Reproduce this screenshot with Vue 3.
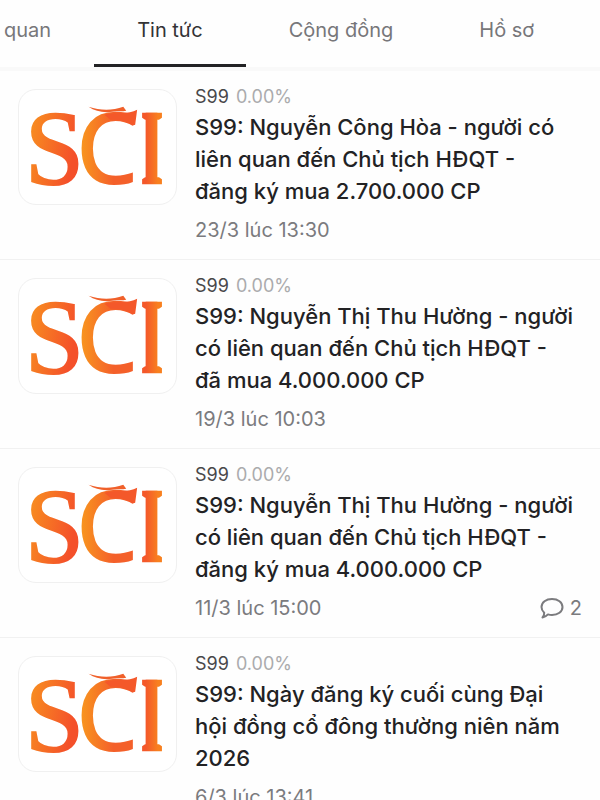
<template>
  <div class="page">
    <nav class="tabs" aria-label="S99">
      <button
        v-for="tab in tabs"
        :key="tab"
        type="button"
        class="tab"
        :class="{ active: tab === activeTab }"
        @click="activeTab = tab"
      >
        {{ tab }}
      </button>
    </nav>

    <main class="news-list">
      <article v-for="item in news" :key="item.time" class="news-item">
        <div class="thumb">
          <svg class="logo" viewBox="0 0 158 115" aria-hidden="true">
            <defs>
              <linearGradient id="warm" x1="0" y1="0" x2="1" y2="0.4">
                <stop offset="0.1" stop-color="#f8941f" />
                <stop offset="0.9" stop-color="#f4502a" />
              </linearGradient>
              <linearGradient id="curve" x1="0" y1="0" x2="1" y2="0">
                <stop offset="0.1" stop-color="#f8941f" />
                <stop offset="0.6" stop-color="#f4602a" />
              </linearGradient>
              <linearGradient id="stem" x1="124" y1="0" x2="144" y2="0" gradientUnits="userSpaceOnUse">
                <stop offset="0.2" stop-color="#f4582a" />
                <stop offset="0.8" stop-color="#f8801f" />
              </linearGradient>
            </defs>
            <text class="letter" x="6" y="95" fill="url(#warm)" stroke="url(#warm)">S</text>
            <text class="letter round" x="57" y="95" fill="url(#curve)">C</text>
            <text class="letter narrow" x="118" y="95" fill="url(#stem)">I</text>
            <path d="M124 23 H144 V28 L141 30 H127 L124 28 Z M124 95 H144 V90 L141 88 H127 L124 90 Z" fill="url(#stem)" />
            <path d="M86 25 C98 22 110 25 119 20 L117 35 L114 36 C109 31 101 30 92 30 Z" fill="#f4582a" />
            <path d="M70 17 C82 21 94 21 105 17 L108 21 C104 22 100 21 94 22 C85 23 77 22 70 17 Z" fill="#f0602a" />
          </svg>
        </div>
        <div class="content">
          <p class="ticker">S99 <span class="change">0.00%</span></p>
          <h2 class="title">{{ item.title }}</h2>
          <div class="meta">
            <time>{{ item.time }}</time>
            <span v-if="item.comments" class="comments">
              <svg class="bubble" viewBox="0 0 24 22" aria-hidden="true">
                <path d="M12 2 C18 2 22.5 5.300 22.500 10 C22.500 14.600 18 18 12 18 C10.500 18 9.200 17.800 8 17.400 C6.500 19 4.800 20 2.500 20.500 C3.800 19 4.300 17.500 4.200 15.700 C2.500 14.200 1.500 12.300 1.500 10 C1.500 5.300 6 2 12 2 Z" />
              </svg>
              {{ item.comments }}
            </span>
          </div>
        </div>
      </article>
    </main>
  </div>
</template>

<script setup>
import { ref } from 'vue';

const tabs = ['quan', 'Tin tức', 'Cộng đồng', 'Hồ sơ'];
const activeTab = ref('Tin tức');

// Line breaks in the titles are kept when rendered
const news = [
  {
    title: 'S99: Nguyễn Công Hòa - người có\nliên quan đến Chủ tịch HĐQT -\nđăng ký mua 2.700.000 CP',
    time: '23/3 lúc 13:30'
  },
  {
    title: 'S99: Nguyễn Thị Thu Hường - người\ncó liên quan đến Chủ tịch HĐQT -\nđã mua 4.000.000 CP',
    time: '19/3 lúc 10:03'
  },
  {
    title: 'S99: Nguyễn Thị Thu Hường - người\ncó liên quan đến Chủ tịch HĐQT -\nđăng ký mua 4.000.000 CP',
    time: '11/3 lúc 15:00',
    comments: 2
  },
  {
    title: 'S99: Ngày đăng ký cuối cùng Đại\nhội đồng cổ đông thường niên năm\n2026',
    time: '6/3 lúc 13:41'
  }
];
</script>

<style scoped>
.page {
  height: 100vh;
  overflow: hidden;
  background: #fefefe;
  color: #222224;
  font-family: Inter, Roboto, sans-serif;
}

.tabs {
  display: flex;
  height: 67px;
  overflow: hidden;
  border-bottom: 4px solid #f9f9f9;
}

.tab {
  flex: none;
  padding: 0 43px 5px;
  border: 0;
  border-bottom: 3px solid transparent;
  background: none;
  color: #77777a;
  font: inherit;
  font-size: 20px;
  cursor: pointer;
}

.tab:first-child {
  padding-left: 4px;
}

.tab.active {
  border-bottom-color: #222224;
  color: #333335;
}

.news-item {
  display: flex;
  align-items: flex-start;
  gap: 18px;
  padding: 14px 18px 17px;
  border-bottom: 1px solid #f1f1f1;
}

.thumb {
  flex: none;
  box-sizing: border-box;
  width: 159px;
  height: 116px;
  margin-top: 4px;
  border: 1px solid #f0f0f0;
  border-radius: 18px;
  background: #ffffff;
}

.logo {
  display: block;
  width: 100%;
  height: 100%;
  overflow: visible;
}

.letter {
  font-family: "Liberation Serif", serif;
  font-size: 107px;
  stroke-width: 2px;
}

.letter.round {
  font-family: "Noto Sans", sans-serif;
  font-size: 100px;
  font-weight: 500;
}

.letter.narrow {
  font-family: "Open Sans", sans-serif;
  font-size: 101px;
  font-weight: 600;
}

.content {
  flex: 1;
  min-width: 0;
}

.ticker {
  margin: 0 0 2px;
  color: #48484a;
  font-size: 18px;
  line-height: 24px;
}

.change {
  margin-left: 2px;
  color: #ababad;
}

.title {
  margin: 0;
  font-size: 22px;
  font-weight: 500;
  line-height: 32px;
  white-space: pre-line;
}

.meta {
  display: flex;
  align-items: center;
  justify-content: space-between;
  margin-top: 11px;
  color: #7b7b7e;
  font-size: 20px;
  line-height: 24px;
}

.comments {
  display: flex;
  align-items: center;
  gap: 6px;
}

.bubble {
  width: 24px;
  height: 22px;
  fill: none;
  stroke: #7b7b7e;
  stroke-width: 2px;
  stroke-linejoin: round;
}
</style>

<style>
body {
  margin: 0;
}
</style>
